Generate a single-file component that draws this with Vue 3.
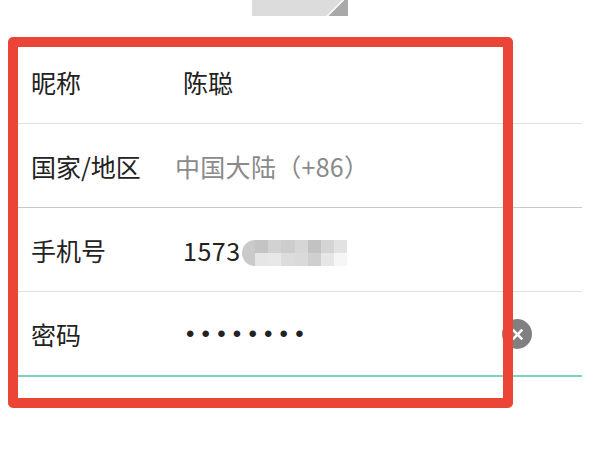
<template>
  <div class="page">
    <div class="top-thumb">
      <svg class="fold" width="24" height="16" viewBox="0 0 24 16">
        <path d="M4 16L20 0h4v16z" fill="#a9a9a9" />
        <path d="M2 16L18 0h2.500L4.500 16z" fill="#f6f6f6" />
      </svg>
    </div>

    <div class="form">
      <div class="row">
        <span class="label">昵称</span>
        <span class="value">陈聪</span>
      </div>
      <div class="row row-dark">
        <span class="label">国家/地区</span>
        <span class="value region">中国大陆（+86）</span>
      </div>
      <div class="row">
        <span class="label">手机号</span>
        <span class="value phone">
          1573
          <span class="mosaic">
            <i v-for="(c, i) in cells" :key="i" :style="{ background: c }"></i>
          </span>
        </span>
      </div>
      <div class="row row-active">
        <span class="label">密码</span>
        <span class="value dots">••••••••</span>
        <span class="clear">
          <svg width="15" height="15" viewBox="0 0 14 14">
            <path d="M2.500 2.500l9 9M11.500 2.500l-9 9" stroke="#fff" stroke-width="2.400" fill="none" />
          </svg>
        </span>
      </div>
    </div>

    <div class="frame"></div>
  </div>
</template>

<script setup>
const cells = [
  '#cacaca', '#c4c4c4', '#d2d2d2', '#cdcdcd', '#d6d6d6', '#c2c2c2', '#d4d4d4', '#e2e2e2',
  '#cacaca', '#e6e6e6', '#e8e8e8', '#dcdcdc', '#dadada', '#cfcfcf', '#e6e6e6', '#f6f6f6'
]
</script>

<style>
html,
body {
  margin: 0;
  background: #fff;
}
</style>

<style scoped>
.page {
  position: relative;
  width: 600px;
  height: 450px;
  overflow: hidden;
  background: #fff;
  font-family: "Noto Sans CJK SC", "Liberation Sans", sans-serif;
  color: #222;
}

.top-thumb {
  position: relative;
  width: 96px;
  height: 16px;
  margin: 0 auto;
  background: #dcdcdc;
  overflow: hidden;
}

.fold {
  position: absolute;
  right: 0;
  bottom: 0;
}

.form {
  margin: 24px 18px 0;
}

.row {
  display: flex;
  align-items: center;
  height: 84px;
  border-bottom: 1px solid #e0e0e0;
  box-sizing: border-box;
  font-size: 25px;
  position: relative;
}

.row-dark {
  border-bottom-color: #c8c8c8;
}

.row-active {
  height: 85px;
  border-bottom: 2px solid #7ad6c2;
}

.label {
  width: 165px;
  padding-left: 13px;
  box-sizing: border-box;
  flex-shrink: 0;
}

.region {
  margin-left: -8px;
  color: #8a8a8a;
  letter-spacing: 0.3px;
}

.phone {
  position: relative;
  letter-spacing: 0.5px;
}

.mosaic {
  position: absolute;
  left: 59px;
  top: calc(50% - 10px);
  width: 105px;
  height: 26px;
  display: grid;
  grid-template-columns: repeat(8, 1fr);
  grid-template-rows: 1fr 1fr;
  border-radius: 13px 0 0 13px;
  overflow: hidden;
}

.dots {
  margin-left: 3px;
  font-family: "Liberation Sans", sans-serif;
  font-size: 24px;
  letter-spacing: 7.200px;
  color: #222;
}

.clear {
  position: absolute;
  right: 50px;
  top: 27px;
  width: 30px;
  height: 30px;
  border-radius: 50%;
  background: #808080;
  display: flex;
  align-items: center;
  justify-content: center;
}

.frame {
  position: absolute;
  left: 8px;
  top: 37px;
  width: 505px;
  height: 371px;
  box-sizing: border-box;
  border: 10px solid #ea4537;
  border-radius: 5px;
}
</style>
